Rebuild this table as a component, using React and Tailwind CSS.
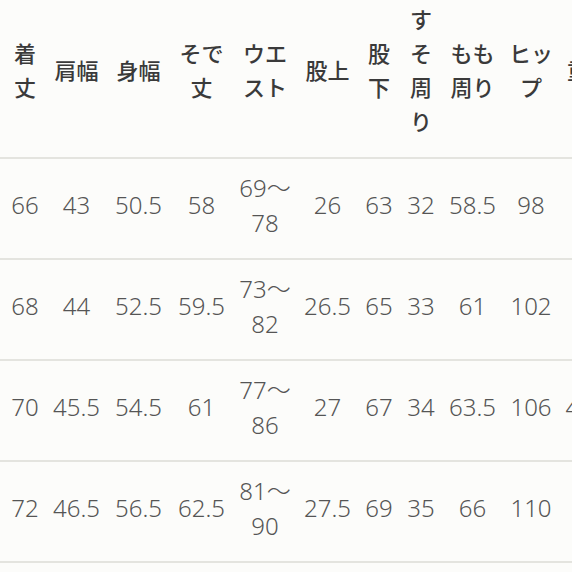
import React from 'react';

const cols = 'grid grid-cols-[42px_61px_63px_63px_64px_61px_42px_42px_61px_56px_60px]';

const headers = [
  ['着', '丈'],
  ['肩幅'],
  ['身幅'],
  ['そで', '丈'],
  ['ウエ', 'スト'],
  ['股上'],
  ['股', '下'],
  ['す', 'そ', '周', 'り'],
  ['もも', '周り'],
  ['ヒッ', 'プ'],
  ['重量'],
];

const rows = [
  ['66', '43', '50.5', '58', ['69～', '78'], '26', '63', '32', '58.5', '98', ''],
  ['68', '44', '52.5', '59.5', ['73～', '82'], '26.5', '65', '33', '61', '102', ''],
  ['70', '45.5', '54.5', '61', ['77～', '86'], '27', '67', '34', '63.5', '106', '45.5'],
  ['72', '46.5', '56.5', '62.5', ['81～', '90'], '27.5', '69', '35', '66', '110', ''],
];

export default function App() {
  return (
    <div className="w-[572px] h-[572px] overflow-hidden bg-[#fcfcfa]">
      <div className="w-[640px] pl-1">
        {/* header */}
        <div className={`${cols} h-[157px] pb-[19px] items-center`}>
          {headers.map((h, i) => (
            <div
              key={i}
              className="text-center text-[22px] leading-[34px] font-medium text-[#3a3a3a]"
              style={{ fontFamily: '"Noto Sans CJK JP", sans-serif' }}
            >
              {h.map((line, j) => (
                <div key={j}>{line}</div>
              ))}
            </div>
          ))}
        </div>
        <div className="h-[2px] bg-[#e4e4df] -ml-1 w-[580px]" />

        {rows.map((r, i) => (
          <React.Fragment key={i}>
            <div className={`${cols} h-[99px] pb-2 items-center`}>
              {r.map((v, j) => (
                <div
                  key={j}
                  className="text-center text-[24px] leading-[35px] font-light text-[#555555] whitespace-nowrap"
                  style={{ fontFamily: '"Noto Sans", "Noto Sans CJK JP", sans-serif' }}
                >
                  {Array.isArray(v) ? v.map((line, k) => <div key={k}>{line}</div>) : v}
                </div>
              ))}
            </div>
            <div className="h-[2px] bg-[#e4e4df] -ml-1 w-[580px]" />
          </React.Fragment>
        ))}
      </div>
    </div>
  );
}
